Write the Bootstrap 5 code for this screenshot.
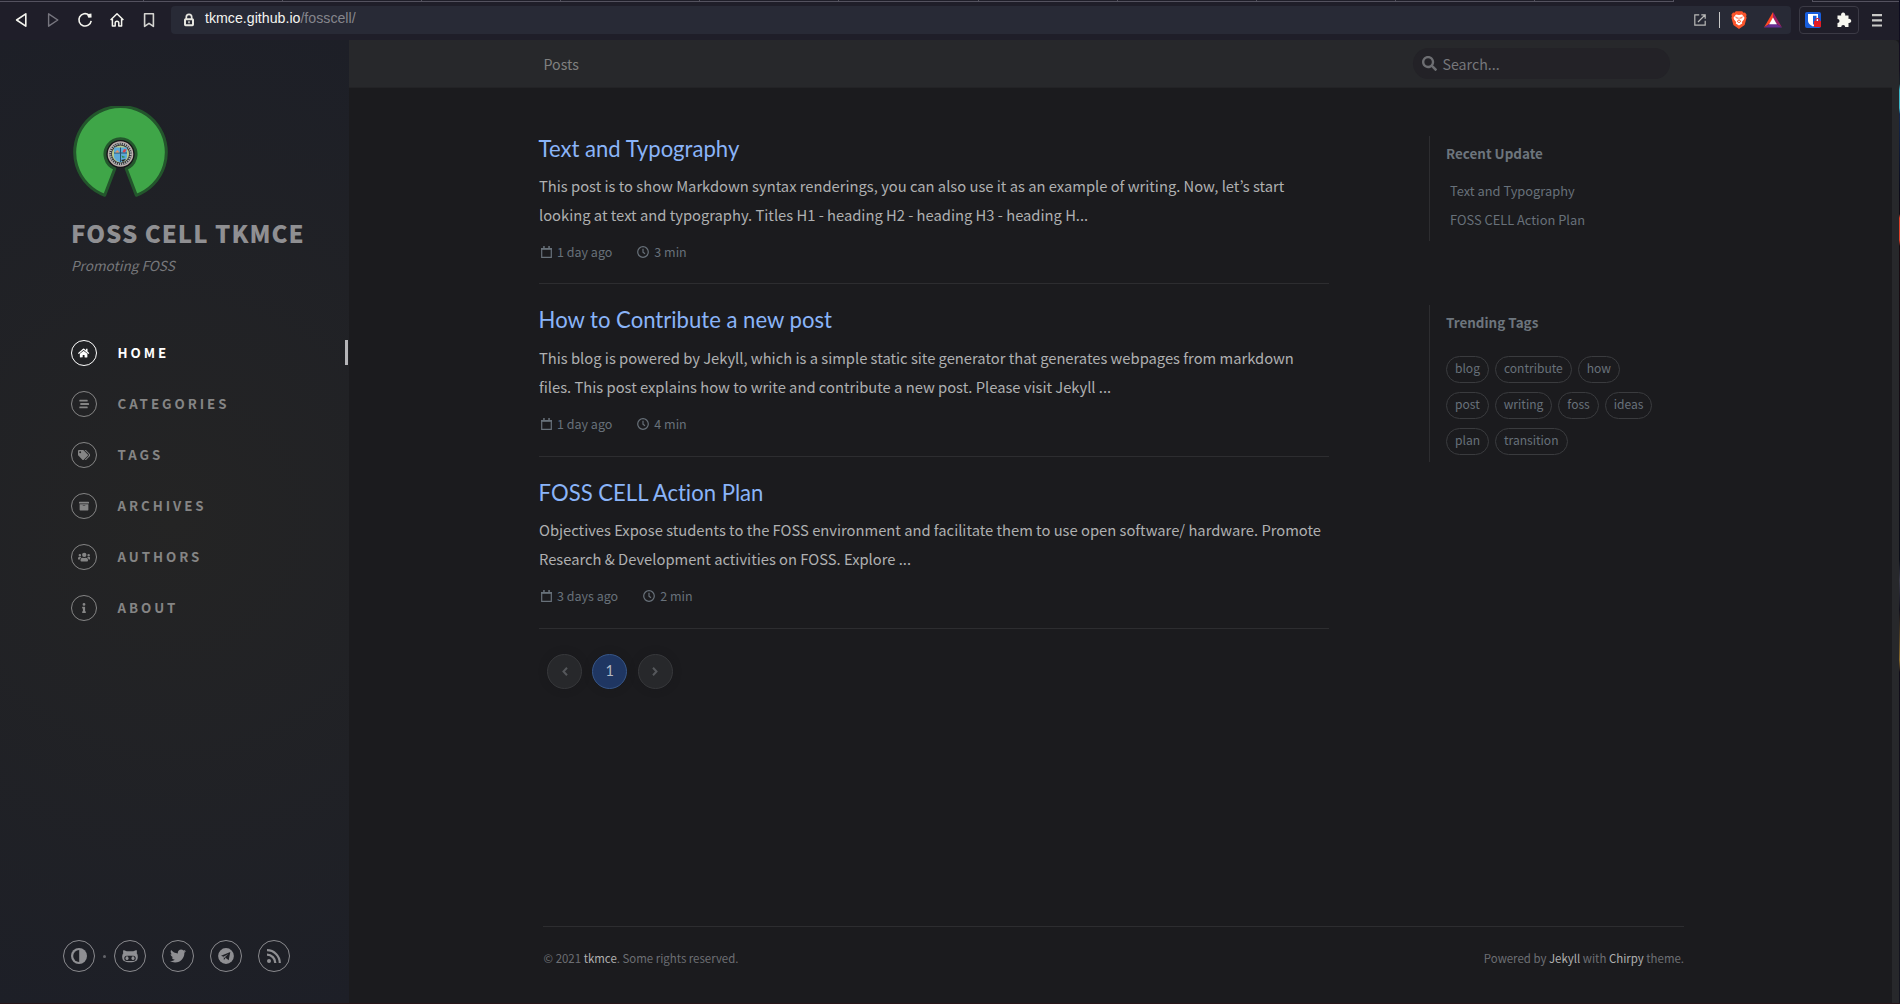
<!DOCTYPE html>
<html lang="en">
<head>
<meta charset="utf-8">
<title>FOSS CELL TKMCE</title>
<link href="https://cdn.jsdelivr.net/npm/bootstrap@5.3.0/dist/css/bootstrap.min.css" rel="stylesheet">
<style>
body{height:1004px;overflow:hidden;background:#1b1b1e;color:#afb0b1;font-family:"Noto Sans CJK KR","Noto Sans",sans-serif;font-size:14.74px;line-height:29px}
a{color:inherit;text-decoration:none}
svg{display:block;flex:none}
.window{height:1003px;width:1899px;background:#1b1b1e}
.desk{width:1px;background:linear-gradient(#0b0a1e 0,#15101f 70px,#17252c 84px,#3ab5c8 90px,#3ab5c8 108px,#132850 114px,#0b0b1b 190px,#180a10 214px,#e04028 218px,#e04028 240px,#1b0a10 246px,#0b0d18 560px,#3a3a48 580px,#12101b 610px,#8a6a2a 660px,#100c18 672px,#14151f 100%)}
.browser{height:40px;background:#1f1e29;color:#f4f4ee}
.tabline{height:2px;margin-bottom:4px}
.tabline i{border-right:1px solid #54525f;border-bottom:1px solid #54525f;width:139.1px}
.tabline i:first-child{width:144px}
.tabline i.gap{border:0;width:138px}
.tabline i.end{width:auto;flex:1;border-left:1px solid #54525f;border-right:0}
.tools{height:28px}
.nav-icons{width:171px;padding-left:13px;gap:16px}
.address{width:1620px;background:#282a36;border-radius:4px;padding:0 9px 0 10px}
.url{font:14.2px/20px "Liberation Sans",sans-serif;margin-left:8px;margin-top:-5px;color:#f4f4f0}
.url span{color:#85858c}
.sep{width:1px;height:16px;background:#c8c8c8;margin:0 11px 0 13px}
.bat{margin-left:17px}
.ext{width:60px;height:28px;border:1px solid #3b3a45;border-radius:4px;margin-left:8px;padding:0 6px 0 5px}
.burger{margin-left:13px}
.sidebar{width:349px;height:963px;background:radial-gradient(circle,#242424 0%,#1d1f27 100%);color:#868686;padding:66px 0 31px;flex:none}
.logo{margin-left:73px}
.site-title{font-weight:900;font-size:24px;letter-spacing:1px;line-height:30px;color:#8f8f92;margin:19px 0 0 71px}
.tagline{font-style:italic;font-size:13.6px;line-height:24px;margin:5px 0 0 71px;color:#77787b}
.side-nav{margin-top:50px}
.side-nav a{height:51px;padding-left:71px;font-weight:700;font-size:13.3px;letter-spacing:2.95px;color:#858585}
.side-nav a.on{color:#fff}
.side-nav a.on::after{content:"";width:3px;height:25px;background:#b5b5b8;margin-left:auto;margin-right:1px}
.ring{width:26px;height:26px;border:1px solid #858585;border-radius:50%;margin-right:20.5px}
.on .ring{border-color:#fff}
.contact{padding-left:63px;gap:16px}
.contact a{width:32px;height:32px;border:1px solid #8a8a8e;border-radius:50%;color:#8f8f93}
.contact .dot{width:3px;height:3px;border-radius:50%;background:#63646a;margin:0 -8px}
.topbar{height:48px;background:#27282b;border-bottom:1px solid #232326;padding:2px 222px 0 194.5px;font-size:14.2px;color:#808080}
.search{width:257px;height:31px;border-radius:16px;background:#232227;padding-left:9px;gap:5.5px;color:#76777b;margin-top:-2px}
.search svg{margin-top:-1px}
.search span{padding-top:1px}
.page{width:1543px;background:#1b1b1e}
.scroll{width:7px;background:#27282b;border-top-right-radius:5px}
.feed{width:790px;margin-left:190px;padding-top:37px}
.post{height:172.6px;border-bottom:1px solid #2d2d30;padding-top:22.4px}
.post:first-child{height:159px;padding-top:9.5px}
.post h1{font:400 22.1px/28px Lato,sans-serif;font-variant-ligatures:none;color:#8ab4f8;margin:0 0 8.500px -.4px}
.post p{margin:0 0 13px}
.meta{font-size:12.5px;line-height:20px;color:#68717a;padding-left:2px;gap:25px}
.meta span{gap:5px}
.pager{gap:10.3px;margin:24.5px 0 0 8px}
.pager a{width:35px;height:35px;border-radius:50%;border:1px solid #37383b;background:#27282b;color:#55575b;font:14.5px/20px Lato,sans-serif;box-shadow:0 0 8px #1717194d}
.pager a.cur{background:#1f3662;border-color:#375688;color:#b5bac4}
.panel{width:240px;margin-left:100px;padding-top:48px;color:#68717a}
.box{border-left:1px solid #2d2d30;padding-left:16px}
.box h2{font-size:13.45px;font-weight:700;line-height:20px;margin:0;color:#6d757d}
.recent{height:105px;padding-top:7px;margin-bottom:64px}
.recent h2{margin-bottom:13px}
.recent a{display:block;font-size:12.85px;line-height:29px;padding-left:4px}
.trend{height:157px;padding-top:7px}
.tags{gap:9px 6px;margin-top:24px;padding-right:10px}
.tags a{font-size:12.05px;line-height:20px;height:27px;border:1px solid #3a3b3e;border-radius:14px;padding:1px 8px 0}
.foot{width:1141px;margin-left:194px;border-top:1px solid #2d2d30;padding:19px 0 0 .6px;height:77px;font-size:11.44px;line-height:24px;color:#6d6f74}
.foot a{color:#b0b0b0}
.edge{height:1px;background:#261519}
</style>
<script src="https://cdn.jsdelivr.net/npm/bootstrap@5.3.0/dist/js/bootstrap.bundle.min.js"></script>
</head>
<body>
<svg width="0" height="0" class="d-none">
  <symbol id="cal" viewBox="0 0 11 12"><path d="M.7 2.600h9.600v8.700H.7z" fill="none" stroke="currentColor" stroke-width="1.200"/><path d="M0 2h11v1.800H0zM2.200 0h1.500v2.500H2.200zM7.300 0h1.500v2.500H7.300z" fill="currentColor"/></symbol>
  <symbol id="clock" viewBox="0 0 12 12"><g fill="none" stroke="currentColor" stroke-width="1.200"><circle cx="6" cy="6" r="5.300"/><path d="M6 2.800v3.400l2 1.500"/></g></symbol>
</svg>
<div class="d-flex">
<div class="window d-flex flex-column">
<header class="browser">
  <div class="tabline d-flex"><i></i><i></i><i></i><i></i><i></i><i></i><i></i><i></i><i></i><i></i><i></i><i></i><i class="gap"></i><i class="end"></i></div>
  <div class="tools d-flex align-items-stretch">
    <div class="nav-icons d-flex align-items-center">
      <svg width="16" height="16" viewBox="0 0 16 16" fill="none" stroke="#f4f4ee" stroke-width="1.6" stroke-linejoin="round"><path d="M12.800 1.800v12.400L3.600 8z"/></svg>
      <svg width="16" height="16" viewBox="0 0 16 16" fill="none" stroke="#77767f" stroke-width="1.4" stroke-linejoin="round"><path d="M3.600 1.800v12.400L12.800 8z"/></svg>
      <svg width="16" height="16" viewBox="0 0 16 16" fill="none" stroke="#f4f4ee" stroke-width="1.6"><path d="M12 3a6.200 6.200 0 1 0 2.200 5.800"/><path d="M9.800 2.200l4.600-.6.200 3.800-3.200.3z" fill="#f4f4ee" stroke="none"/></svg>
      <svg width="16" height="16" viewBox="0 0 16 16" fill="none" stroke="#f4f4ee" stroke-width="1.5" stroke-linejoin="round"><path d="M1.600 8L8 1.800 14.400 8M3.400 7v7h2.800v-3a1.800 1.800 0 0 1 3.600 0v3h2.800V7"/></svg>
      <svg width="16" height="16" viewBox="0 0 16 16" fill="none" stroke="#d4d4d0" stroke-width="1.6" stroke-linejoin="round"><path d="M3.600 1.800h8.800v12.600L8 11.400l-4.400 3z"/></svg>
    </div>
    <div class="address d-flex align-items-center">
      <svg width="16" height="14" viewBox="0 0 16 14" fill="none" stroke="#e6e6e0"><path d="M5.300 6V4a2.700 2.700 0 0 1 5.400 0v2" stroke-width="1.700"/><rect x="4" y="6.200" width="8" height="6" rx=".6" stroke-width="2"/><path d="M8 8.200v2" stroke-width="1.400"/></svg>
      <div class="url">tkmce.github.io<span>/fosscell/</span></div>
      <div class="ms-auto d-flex align-items-center">
        <svg width="12" height="12" viewBox="0 0 12 12" fill="none" stroke="#b9b9b8" stroke-width="1.2"><path d="M5.200.8H.8v10.400h10.400V6.800M7.300.8h3.900v3.900M11 1L4 8"/></svg>
        <span class="sep"></span>
        <svg width="16" height="18" viewBox="0 0 16 18"><path d="M4.800.2h6.400l1.300 1.500 1.500-.2 1.600 2.300-.5 1.600.5 1.400-2 7.300L8 17.900l-5.600-3.800-2-7.300.5-1.400-.5-1.600L2 1.500l1.500.2z" fill="#fb542b"/><path d="M5 3.500l3 .5 3-.5 2.500 3.200-.6 1.800-2 2.500.3 1.500L8 14.600l-3.200-2.100.3-1.500-2-2.500-.6-1.800z" fill="#fff"/><path d="M4.300 6l2.200.7-.6 1.300M11.700 6l-2.200.7.6 1.300M8 6.500V9M6 10.200l2-.8 2 .8-2 1.600z" stroke="#fb542b" stroke-width=".8" fill="none"/></svg>
        <svg class="bat" width="18" height="16" viewBox="0 0 18 16"><path d="M9 0v6.200L5.300 12 0 15.500z" fill="#ff4724"/><path d="M9 0l9 15.500L12.700 12 9 6.200z" fill="#9e1f63"/><path d="M0 15.500L5.300 12h7.400l5.300 3.500z" fill="#662d91"/><path d="M9 5.500l3.900 6.700H5.100z" fill="#fff"/></svg>
      </div>
    </div>
    <div class="ext d-flex align-items-center justify-content-between">
      <svg width="17" height="16" viewBox="0 0 17 16"><rect width="16" height="16" rx="2" fill="#175ddc"/><path d="M3 2h10v7c0 2-2 4-5 5.500C5 13 3 11 3 9z" fill="#fff"/><path d="M8 3.700h3.500V9c0 1.500-1.500 2.800-3.500 3.800z" fill="#175ddc"/><path d="M9 9h7v6H9z" fill="#e31b23"/><path d="M10.700 9.500V8.300a1.800 1.800 0 0 1 3.600 0v1.200" fill="none" stroke="#e31b23" stroke-width="1.200"/></svg>
      <svg width="16" height="16" viewBox="0 0 16 16" fill="#f7f7f0"><path d="M1.500 3.500h3.700a2.100 2.100 0 1 1 3.900 0h3.400v3.400a2.100 2.100 0 1 1 0 4v4H9.200a2 2 0 1 0-4 0H1.500v-3.800a2 2 0 1 0 0-4z"/></svg>
    </div>
    <svg class="burger align-self-center" width="10" height="13" fill="#c9c9c7"><path d="M0 0h10v2.200H0zM0 5.200h10v2.200H0zM0 10.400h10v2.200H0z"/></svg>
  </div>
</header>
<div class="d-flex">
<aside class="sidebar d-flex flex-column">
  <svg class="logo" width="95" height="93" viewBox="0 0 95 93"><path d="M31.700 89.300A45.800 45.800 0 1 1 63.300 89.300L53.200 62.700A15.500 15.500 0 1 0 41.800 62.700Z" fill="#3fa648" stroke="#23562c" stroke-width="3" stroke-linejoin="round"/><circle cx="47.500" cy="48" r="14" fill="#171719"/><circle cx="47.500" cy="48" r="12" fill="#343438" stroke="#bdb0ac" stroke-width="1.600"/><circle cx="47.500" cy="48" r="10.300" fill="none" stroke="#b4b9bb" stroke-width="2" stroke-dasharray="1.200 1"/><circle cx="47.500" cy="48" r="8.600" fill="#b7c98c"/><path d="M41 41.500h13v9.500q-1 4-6.500 5.500Q42 55 41 51z" fill="#5da9d8"/><path d="M47.500 41.500V56M41 47h13" stroke="#24506b" stroke-width="1"/><path d="M42 46.500l2.500-2.500 2 2.500z" fill="#e0926b"/><path d="M49.500 46l1.500-3 2.500.5-1.500 3z" fill="#d9434a"/><path d="M48.500 49.500l4 1.500-3 1z" fill="#2e8b46"/><path d="M48 54l5-1-3 3z" fill="#222"/></svg>
  <h1 class="site-title">FOSS CELL TKMCE</h1>
  <div class="tagline">Promoting FOSS</div>
  <nav class="side-nav">
    <a href="#" class="on d-flex align-items-center"><span class="ring d-flex align-items-center justify-content-center"><svg width="11.250" height="10" viewBox="0 0 576 512" fill="currentColor"><path d="M280 148L96 300v164a16 16 0 0 0 16 16l112-.3a16 16 0 0 0 16-16V368a16 16 0 0 1 16-16h64a16 16 0 0 1 16 16v96a16 16 0 0 0 16 16l112 .3a16 16 0 0 0 16-16V300L296 148a12 12 0 0 0-16 0zM571 251l-83-69V44a12 12 0 0 0-12-12h-56a12 12 0 0 0-12 12v72L319 43a48 48 0 0 0-61 0L4 251a12 12 0 0 0-2 17l26 31a12 12 0 0 0 17 2L280 107a12 12 0 0 1 16 0l235 194a12 12 0 0 0 17-2l25-31a12 12 0 0 0-2-17z"/></svg></span>HOME</a>
    <a href="#" class="d-flex align-items-center"><span class="ring d-flex align-items-center justify-content-center"><svg width="10" height="10" viewBox="0 0 10 10" fill="currentColor"><rect x=".3" y=".8" width="8.400" height="1.800" rx=".5"/><rect x="1.300" y="4.100" width="8.700" height="1.800" rx=".5"/><rect x=".3" y="7.400" width="8.400" height="1.800" rx=".5"/></svg></span>CATEGORIES</a>
    <a href="#" class="d-flex align-items-center"><span class="ring d-flex align-items-center justify-content-center"><svg width="12.500" height="10" viewBox="0 0 640 512" fill="currentColor"><path d="M498 225L287 14A48 48 0 0 0 252 0H48A48 48 0 0 0 0 48v204a48 48 0 0 0 14 34l212 212a48 48 0 0 0 68 0l204-204a48 48 0 0 0 0-69zM112 160a48 48 0 1 1 0-96 48 48 0 0 1 0 96zm514 134L422 498a48 48 0 0 1-68 0l-.4-.4L528 324a90 90 0 0 0 0-127L331 0h49a48 48 0 0 1 34 14l212 211a48 48 0 0 1 0 69z"/></svg></span>TAGS</a>
    <a href="#" class="d-flex align-items-center"><span class="ring d-flex align-items-center justify-content-center"><svg width="10" height="10" viewBox="0 0 512 512" fill="currentColor"><path d="M32 448a32 32 0 0 0 32 32h384a32 32 0 0 0 32-32V160H32zm160-212a12 12 0 0 1 12-12h104a12 12 0 0 1 12 12v8a12 12 0 0 1-12 12H204a12 12 0 0 1-12-12zM480 32H32A32 32 0 0 0 0 64v48a16 16 0 0 0 16 16h480a16 16 0 0 0 16-16V64a32 32 0 0 0-32-32z"/></svg></span>ARCHIVES</a>
    <a href="#" class="d-flex align-items-center"><span class="ring d-flex align-items-center justify-content-center"><svg width="12.500" height="10" viewBox="0 0 640 512" fill="currentColor"><path d="M96 224a64 64 0 1 0 0-128 64 64 0 0 0 0 128zm448 0a64 64 0 1 0 0-128 64 64 0 0 0 0 128zm32 32h-64c-18 0-34 7-45 19 40 22 69 62 75 109h66a32 32 0 0 0 32-32v-32a64 64 0 0 0-64-64zm-256 0a112 112 0 1 0 0-224 112 112 0 0 0 0 224zm77 32h-8a155 155 0 0 1-138 0h-8A115 115 0 0 0 128 403v29a48 48 0 0 0 48 48h288a48 48 0 0 0 48-48v-29a115 115 0 0 0-115-115zm-224-13c-11-12-27-19-45-19H64a64 64 0 0 0-64 64v32a32 32 0 0 0 32 32h66c6-47 35-87 75-109z"/></svg></span>AUTHORS</a>
    <a href="#" class="d-flex align-items-center"><span class="ring d-flex align-items-center justify-content-center"><svg width="4" height="10" viewBox="0 0 192 512" fill="currentColor"><path d="M20 424h20V280H20a20 20 0 0 1-20-20v-48a20 20 0 0 1 20-20h112a20 20 0 0 1 20 20v212h20a20 20 0 0 1 20 20v48a20 20 0 0 1-20 20H20a20 20 0 0 1-20-20v-48a20 20 0 0 1 20-20zM96 0a72 72 0 1 0 0 144A72 72 0 0 0 96 0z"/></svg></span>ABOUT</a>
  </nav>
  <div class="contact d-flex align-items-center mt-auto">
    <a href="#" class="d-flex align-items-center justify-content-center"><svg width="16" height="16" viewBox="0 0 16 16"><circle cx="8" cy="8" r="8" fill="currentColor"/><path d="M8.200 2a6 6 0 0 0 0 12z" fill="#1f2026"/></svg></a>
    <span class="dot"></span>
    <a href="#" class="d-flex align-items-center justify-content-center"><svg width="16" height="16" viewBox="0 0 16 16"><path d="M1.500 2l3.200 1.300h6.600L14.500 2c.6 1.200.5 2.400.2 3.200.9 1.100 1.100 2.300 1.100 3.800 0 4-2.600 5.200-7.800 5.200S.2 13 .2 9c0-1.500.2-2.700 1.100-3.800C1 4.400.9 3.200 1.500 2z" fill="currentColor"/><rect x="2.300" y="7.700" width="11.400" height="5.400" rx="2.500" fill="#1f2026"/><ellipse cx="5" cy="10.200" rx="1.500" ry="1.900" fill="currentColor"/><ellipse cx="11" cy="10.200" rx="1.500" ry="1.900" fill="currentColor"/></svg></a>
    <a href="#" class="d-flex align-items-center justify-content-center"><svg width="16" height="16" viewBox="0 0 512 512" fill="currentColor"><path d="M459.400 151.700c.3 4.600.3 9.100.3 13.700 0 138.700-105.600 298.600-298.600 298.600-59.500 0-114.700-17.200-161.100-47.100 8.400 1 16.600 1.300 25.300 1.300 49.100 0 94.200-16.600 130.300-44.800-46.100-1-84.800-31.200-98.100-72.800 6.500 1 13 1.600 19.800 1.600 9.400 0 18.800-1.300 27.600-3.600-48.100-9.700-84.100-52-84.100-103v-1.300c14 7.800 30.200 12.700 47.400 13.300-28.300-18.800-46.800-51-46.800-87.400 0-19.500 5.200-37.400 14.300-53 51.700 63.700 129.300 105.300 216.400 109.800-1.600-7.800-2.600-15.900-2.600-24 0-57.800 46.800-104.900 104.900-104.900 30.200 0 57.500 12.700 76.700 33.100 23.700-4.500 46.500-13.300 66.600-25.300-7.800 24.400-24.400 44.800-46.100 57.800 21.100-2.300 41.600-8.100 60.400-16.200-14.300 20.800-32.200 39.300-52.600 54.300z"/></svg></a>
    <a href="#" class="d-flex align-items-center justify-content-center"><svg width="16" height="16" viewBox="0 0 16 16"><circle cx="8" cy="8" r="7.900" fill="currentColor"/><path d="M12.300 4L3 7.700l2.500 1.100L10.300 6 6.800 9.300l3.900 2.900z" fill="#1f2026"/><path d="M5.800 9v3l1.500-1.500z" fill="#1f2026"/></svg></a>
    <a href="#" class="d-flex align-items-center justify-content-center"><svg width="14" height="14" viewBox="0 0 14 14"><circle cx="2" cy="12" r="2" fill="currentColor"/><path d="M0 5.700A8.300 8.300 0 0 1 8.300 14M0 1.200A12.800 12.800 0 0 1 12.800 14" fill="none" stroke="currentColor" stroke-width="2.200"/></svg></a>
  </div>
</aside>
<main class="page d-flex flex-column">
  <div class="topbar d-flex align-items-center justify-content-between"><span>Posts</span>
    <div class="search d-flex align-items-center"><svg width="15" height="15" viewBox="0 0 512 512" fill="#6d6e72"><path d="M505 442.700L405.300 343c-4.500-4.500-10.600-7-17-7H372c27.600-35.300 44-79.700 44-128C416 93.100 322.900 0 208 0S0 93.100 0 208s93.100 208 208 208c48.300 0 92.700-16.400 128-44v16.300c0 6.400 2.500 12.500 7 17l99.700 99.700c9.400 9.400 24.600 9.400 33.900 0l28.300-28.300c9.400-9.400 9.400-24.600.1-34zM208 336c-70.700 0-128-57.200-128-128 0-70.700 57.200-128 128-128 70.700 0 128 57.200 128 128 0 70.700-57.200 128-128 128z"/></svg><span>Search...</span></div>
  </div>
  <div class="d-flex flex-grow-1">
    <section class="feed">
      <article class="post"><h1><a href="#">Text and Typography</a></h1><p>This post is to show Markdown syntax renderings, you can also use it as an example of writing. Now, let’s start<br>looking at text and typography. Titles H1 - heading H2 - heading H3 - heading H...</p>
        <div class="meta d-flex"><span class="d-flex align-items-center"><svg width="11" height="12"><use href="#cal"/></svg>1 day ago</span><span class="d-flex align-items-center"><svg width="12" height="12"><use href="#clock"/></svg>3 min</span></div></article>
      <article class="post"><h1><a href="#">How to Contribute a new post</a></h1><p>This blog is powered by Jekyll, which is a simple static site generator that generates webpages from markdown<br>files. This post explains how to write and contribute a new post. Please visit Jekyll ...</p>
        <div class="meta d-flex"><span class="d-flex align-items-center"><svg width="11" height="12"><use href="#cal"/></svg>1 day ago</span><span class="d-flex align-items-center"><svg width="12" height="12"><use href="#clock"/></svg>4 min</span></div></article>
      <article class="post"><h1><a href="#">FOSS CELL Action Plan</a></h1><p>Objectives Expose students to the FOSS environment and facilitate them to use open software/ hardware. Promote<br>Research &amp; Development activities on FOSS. Explore ...</p>
        <div class="meta d-flex"><span class="d-flex align-items-center"><svg width="11" height="12"><use href="#cal"/></svg>3 days ago</span><span class="d-flex align-items-center"><svg width="12" height="12"><use href="#clock"/></svg>2 min</span></div></article>
      <nav class="pager d-flex"><a href="#" class="d-flex align-items-center justify-content-center"><svg width="6" height="9" viewBox="0 0 6 9" fill="none" stroke="currentColor" stroke-width="2"><path d="M5 .8L1.500 4.500 5 8.200"/></svg></a><a href="#" class="cur d-flex align-items-center justify-content-center">1</a><a href="#" class="d-flex align-items-center justify-content-center"><svg width="6" height="9" viewBox="0 0 6 9" fill="none" stroke="currentColor" stroke-width="2"><path d="M1 .8l3.500 3.700L1 8.200"/></svg></a></nav>
    </section>
    <aside class="panel">
      <div class="box recent"><h2>Recent Update</h2><a href="#">Text and Typography</a><a href="#">FOSS CELL Action Plan</a></div>
      <div class="box trend"><h2>Trending Tags</h2><div class="tags d-flex flex-wrap"><a href="#">blog</a><a href="#">contribute</a><a href="#">how</a><a href="#">post</a><a href="#">writing</a><a href="#">foss</a><a href="#">ideas</a><a href="#">plan</a><a href="#">transition</a></div></div>
    </aside>
  </div>
  <footer class="foot d-flex justify-content-between"><div>© 2021 <a href="#">tkmce</a>. Some rights reserved.</div><div>Powered by <a href="#">Jekyll</a> with <a href="#">Chirpy</a> theme.</div></footer>
</main>
<div class="scroll"></div>
</div>
</div>
<div class="desk"></div>
</div>
<div class="edge"></div>
</body>
</html>
